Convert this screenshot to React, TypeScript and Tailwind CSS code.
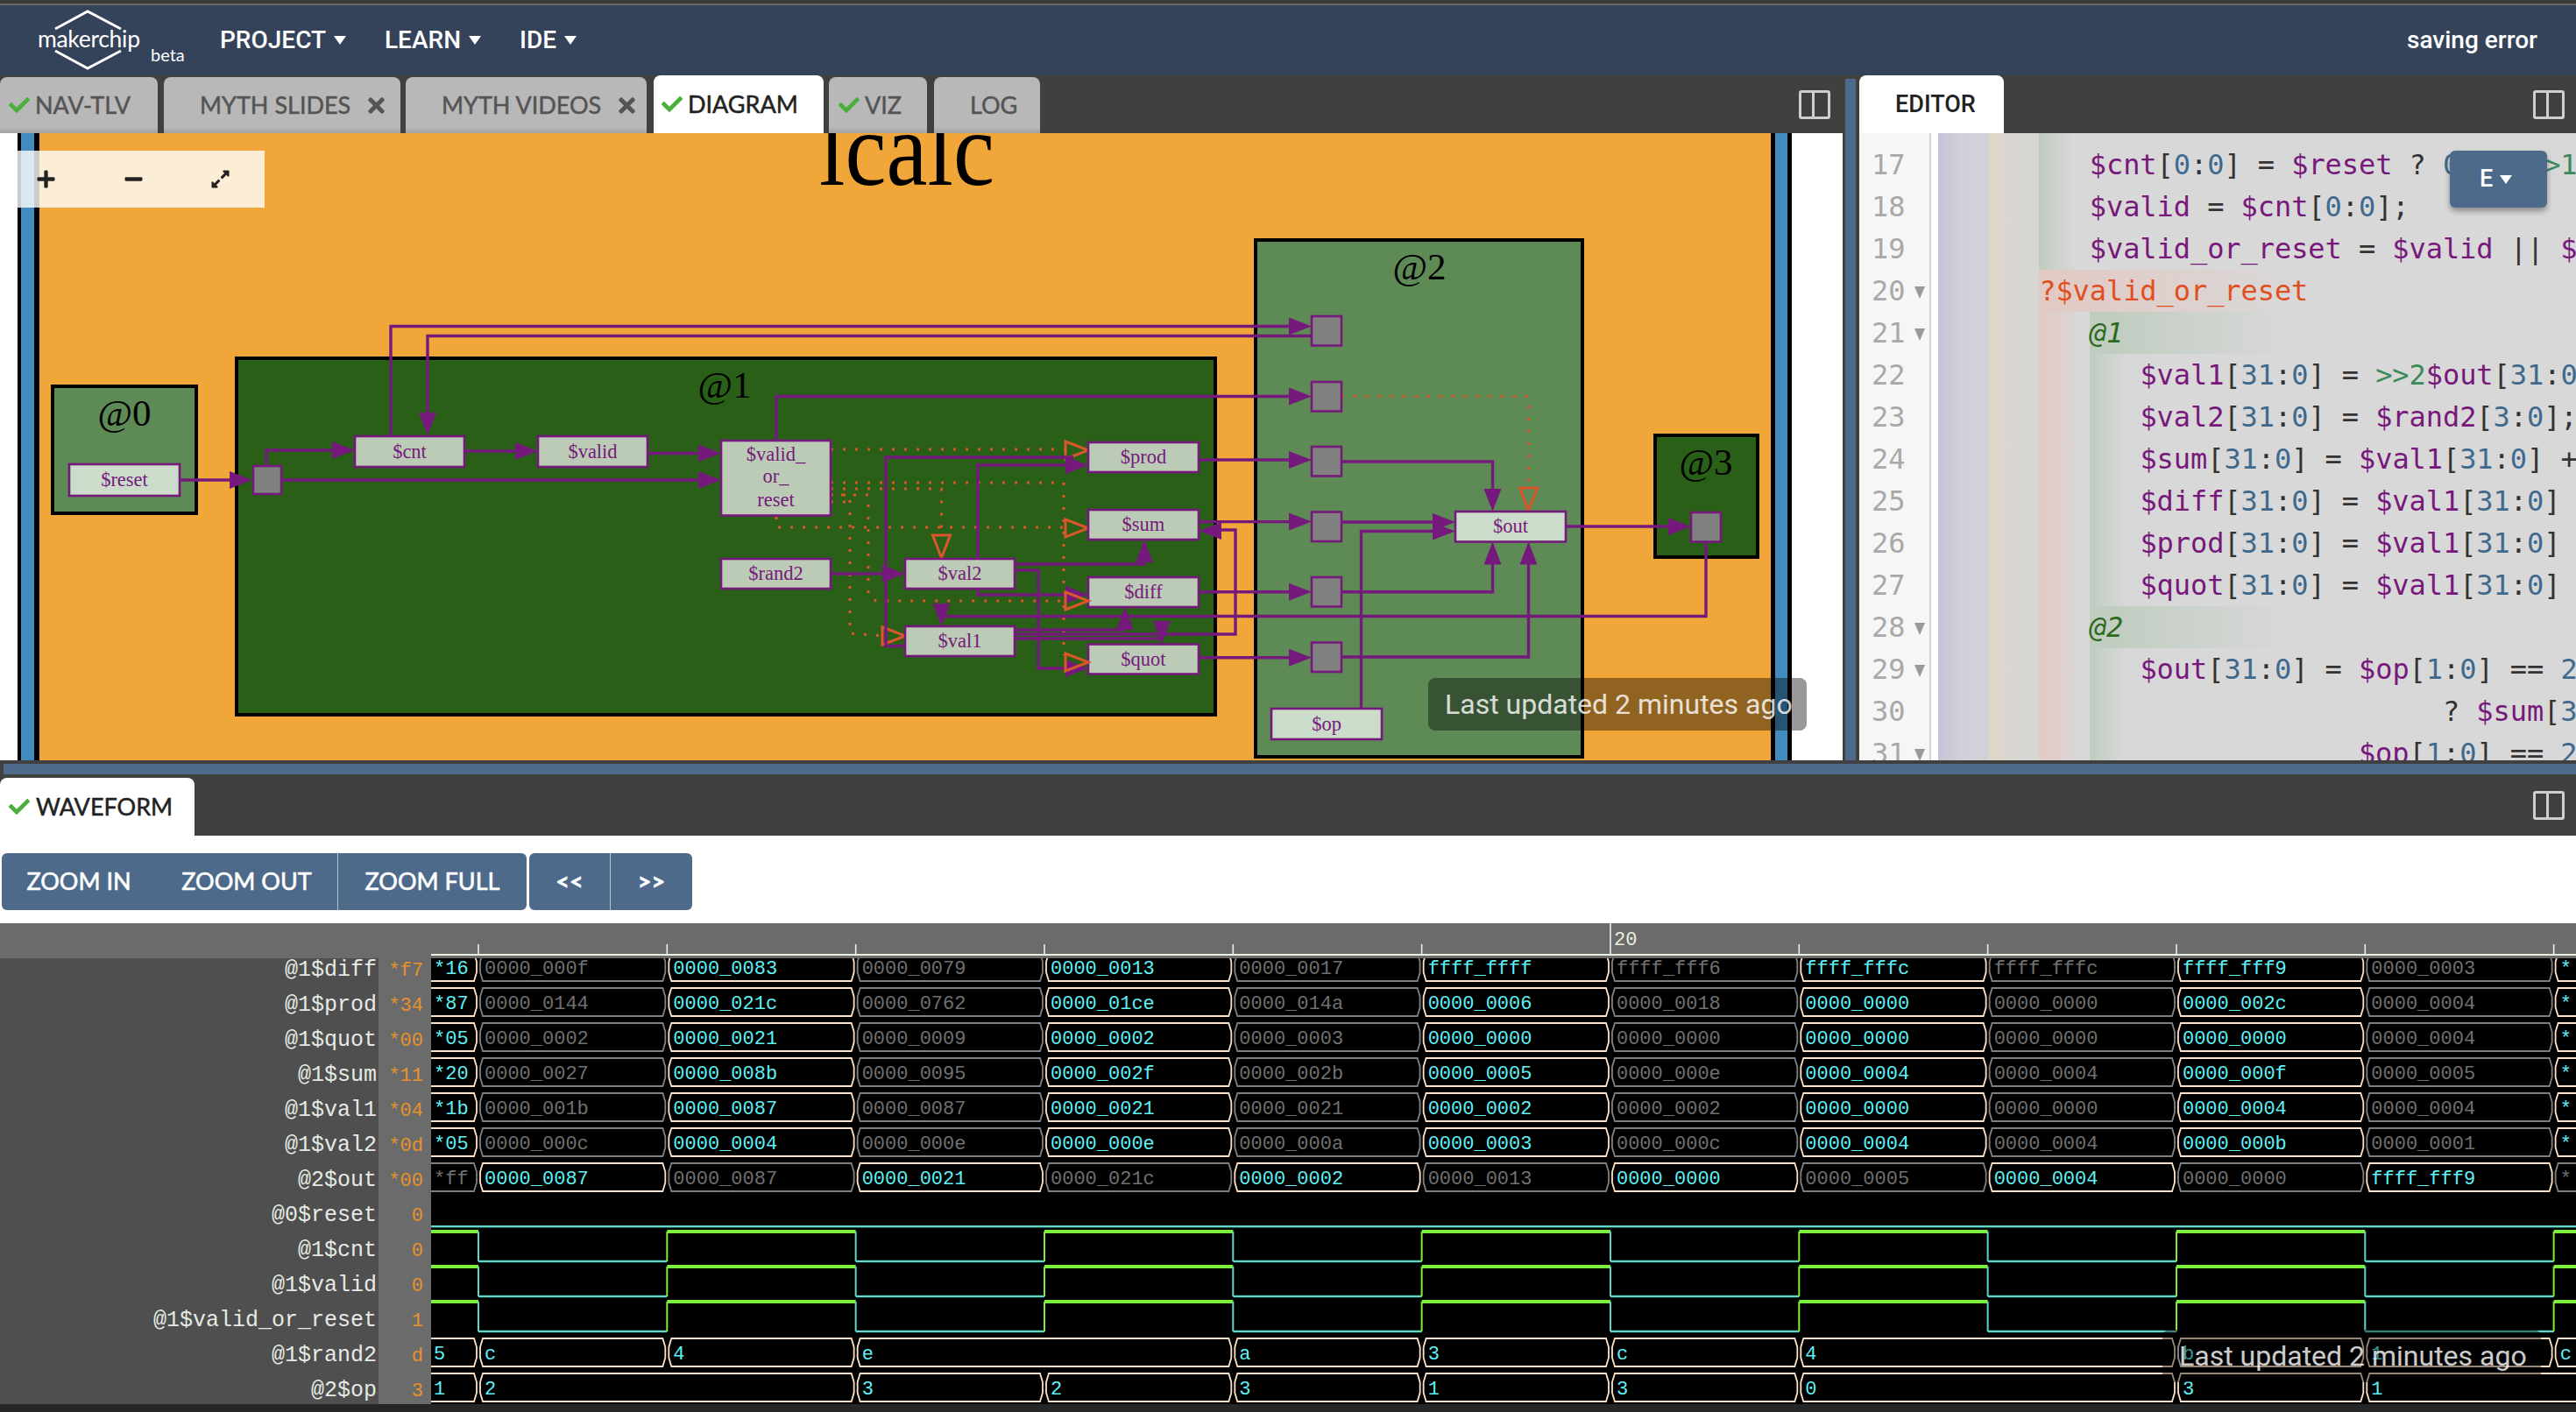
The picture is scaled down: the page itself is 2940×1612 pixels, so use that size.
import React from 'react';
import { FaCheck, FaTimes, FaPlus, FaMinus, FaExpandAlt } from 'react-icons/fa';

const PURPLE = '#751a7c';
const ORANGE = '#d9572a';

const Caret: React.FC<{ className?: string }> = ({ className }) => (
  <span className={`inline-block w-0 h-0 border-x-[7px] border-x-transparent border-t-[10px] ${className ?? 'border-t-white'}`} />
);

const SplitIcon: React.FC = () => (
  <span className="flex w-[36px] h-[33px] rounded-[3px] border-[3px] border-[#cfcfcf]">
    <span className="w-1/2 border-r-[3px] border-[#cfcfcf]" />
  </span>
);

const Toast: React.FC<{ className: string }> = ({ className }) => (
  <div className={`absolute h-[60px] w-[432px] rounded-lg bg-black/40 pl-[19px] flex items-center font-['Roboto'] text-[32px] text-white/80 whitespace-nowrap ${className}`}>
    Last updated 2 minutes ago
  </div>
);

const Tab: React.FC<{
  label: string;
  width: string;
  pad: string;
  active?: boolean;
  check?: boolean;
  close?: boolean;
}> = ({ label, width, pad, active, check, close }) => (
  <div
    className={`flex items-center rounded-t-lg font-['Lato'] text-[27px] [-webkit-text-stroke:0.5px_currentColor] whitespace-nowrap ${width} ${pad} ${
      active
        ? 'h-[66px] bg-white text-[#222]'
        : 'h-[64px] bg-linear-to-b from-[#b8b8b8] from-90% to-[#a0a0a0] text-[#555]'
    }`}
  >
    {check && <FaCheck className="text-[#4cae3c] text-[24px] mr-[6px] shrink-0" />}
    <span>{label}</span>
    {close && <FaTimes className="text-[#555] text-[27px] ml-[16px] shrink-0" />}
  </div>
);

/* ---------- diagram ---------- */

type Dir = 'r' | 'l' | 'u' | 'd';

const tri = (x: number, y: number, d: Dir) => {
  const L = 26;
  const H = 10;
  if (d === 'r') return `${x - L},${y - H} ${x},${y} ${x - L},${y + H}`;
  if (d === 'l') return `${x + L},${y - H} ${x},${y} ${x + L},${y + H}`;
  if (d === 'd') return `${x - H},${y - L} ${x},${y} ${x + H},${y - L}`;
  return `${x - H},${y + L} ${x},${y} ${x + H},${y + L}`;
};

const Arrow: React.FC<{ x: number; y: number; d: Dir }> = ({ x, y, d }) => (
  <polygon points={tri(x, y, d)} fill={PURPLE} />
);

const OpenArrow: React.FC<{ x: number; y: number; d: Dir }> = ({ x, y, d }) => (
  <polygon points={tri(x, y, d)} fill="none" stroke={ORANGE} strokeWidth={3} />
);

const Wire: React.FC<{ p: string }> = ({ p }) => (
  <polyline points={p} fill="none" stroke={PURPLE} strokeWidth={3.4} />
);

const Dots: React.FC<{ p: string }> = ({ p }) => (
  <polyline points={p} fill="none" stroke={ORANGE} strokeWidth={3} strokeDasharray="3 11" />
);

const Cell: React.FC<{ x: number; y: number; w: number; h: number; label?: string; fill?: string; text?: number }> = ({
  x,
  y,
  w,
  h,
  label,
  fill = '#bccbb5',
  text,
}) => (
  <g>
    <rect x={x} y={y} width={w} height={h} fill={fill} stroke={PURPLE} strokeWidth={2.6} />
    {label && (
      <text x={x + w / 2} y={text ?? y + h / 2 + 7} textAnchor="middle" fill={PURPLE} fontSize={22.5}>
        {label}
      </text>
    )}
  </g>
);

const Box: React.FC<{ x: number; y: number; w: number; h: number; fill: string; label: string; lx: number; ly: number }> = ({
  x,
  y,
  w,
  h,
  fill,
  label,
  lx,
  ly,
}) => (
  <g>
    <rect x={x} y={y} width={w} height={h} fill={fill} stroke="#000" strokeWidth={4} />
    <text x={lx} y={ly} textAnchor="middle" fontSize={43} fill="#000">
      {label}
    </text>
  </g>
);

const Flop: React.FC<{ y: number; x?: number }> = ({ y, x = 1497 }) => (
  <Cell x={x} y={y} w={34} h={33.5} fill="#808080" />
);

const Diagram: React.FC = () => (
  <svg viewBox="0 152 2103 716" width={2103} height={716} className="block font-['Liberation_Serif']">
    <rect x={0} y={152} width={2103} height={716} fill="#fff" />
    <rect x={20} y={152} width={25} height={716} fill="#000" />
    <rect x={24} y={152} width={15} height={716} fill="#428bbf" />
    <rect x={45} y={152} width={1976} height={716} fill="#f0a638" />
    <rect x={2021} y={152} width={24} height={716} fill="#000" />
    <rect x={2026} y={152} width={14} height={716} fill="#428bbf" />
    <text x={935} y={211} fontSize={120} fill="#000" textLength={200} lengthAdjust="spacingAndGlyphs">
      lcalc
    </text>

    <Box x={60} y={441} w={164} h={145} fill="#5e8a55" label="@0" lx={142} ly={486} />
    <Box x={270} y={409} w={1117} h={407} fill="#2a5f18" label="@1" lx={827} ly={454} />
    <Box x={1433} y={274} w={373} h={590} fill="#5e8a55" label="@2" lx={1620} ly={319} />
    <Box x={1889} y={497} w={117} h={139} fill="#2a5f18" label="@3" lx={1947} ly={542} />

    {/* retiming */}
    <Dots p="948,513 1218,513" />
    <Dots p="948,551 1214,551 1214,748" />
    <Dots p="948,558 1074.5,558 1074.5,613" />
    <Dots p="948,565 970,565 970,723 1008,726" />
    <Dots p="948,573 965,573" />
    <Dots p="960,565 991,565 991,680 1000,686 1218,686" />
    <Dots p="886,590 886,602 1218,602" />
    <Dots p="1531,452.5 1744.5,452.5 1744.5,559" />
    <OpenArrow x={1242} y={514} d="r" />
    <OpenArrow x={1242} y={603} d="r" />
    <OpenArrow x={1033} y={726} d="r" />
    <OpenArrow x={1074.5} y={637} d="d" />
    <OpenArrow x={1744.5} y={583} d="d" />

    {/* @0 / @1 wires */}
    <Wire p="205,548 264,548" />
    <Arrow x={288} y={548} d="r" />
    <Wire p="304,532 304,514 380,514" />
    <Arrow x={405} y={514} d="r" />
    <Wire p="321,548 798,548" />
    <Arrow x={823} y={548} d="r" />
    <Wire p="530,515 589,515" />
    <Arrow x={614} y={515} d="r" />
    <Wire p="739,517.5 798,517.5" />
    <Arrow x={823} y={517.5} d="r" />
    <Wire p="446,497 446,372.5 1472,372.5" />
    <Arrow x={1497} y={372.5} d="r" />
    <Wire p="1497,383.5 488,383.5 488,472" />
    <Arrow x={488} y={497} d="d" />
    <Wire p="886,503 886,452.5 1472,452.5" />
    <Arrow x={1497} y={452.5} d="r" />

    <Wire p="1368,525 1472,525" />
    <Arrow x={1497} y={525} d="r" />
    <Wire p="1368,595.6 1472,595.6" />
    <Arrow x={1497} y={595.6} d="r" />
    <Wire p="1368,675.7 1472,675.7" />
    <Arrow x={1497} y={675.7} d="r" />
    <Wire p="1368,750.7 1472,750.7" />
    <Arrow x={1497} y={750.7} d="r" />

    <Wire p="948,655 1008,655" />
    <Arrow x={1033} y={655} d="r" />
    <Wire p="1158,644 1306,644 1306,642" />
    <Arrow x={1306} y={616} d="u" />
    <Wire p="1116,638 1116,531 1217,531" />
    <Arrow x={1242} y={531} d="r" />
    <Wire p="1033,737.5 1011,737.5 1011,522 1225,522" />
    <Wire p="1116,672 1116,679 1217,679" />
    <Arrow x={1242} y={679} d="r" />
    <Wire p="1158,651 1185,651 1185,763 1217,763" />
    <Arrow x={1242} y={763} d="r" />
    <Wire p="1158,719 1284,719" />
    <Arrow x={1284} y={693} d="u" />
    <Wire p="1158,724 1410,724 1410,605 1393,605" />
    <Arrow x={1368} y={606} d="l" />
    <Wire p="1158,729 1326,729" />
    <Arrow x={1326} y={735} d="d" />
    <Wire p="1947,618 1947,703.5 1074.5,703.5" />
    <Arrow x={1074.5} y={715} d="d" />

    {/* @2 wires */}
    <Wire p="1531,527 1703.5,527 1703.5,559" />
    <Arrow x={1703.5} y={584} d="d" />
    <Wire p="1531,596 1636,596" />
    <Arrow x={1661} y={596} d="r" />
    <Wire p="1553.5,809 1553.5,606.5 1636,606.5" />
    <Arrow x={1661} y={606.5} d="r" />
    <Wire p="1531,675.8 1703.5,675.8 1703.5,644" />
    <Arrow x={1703.5} y={618.5} d="u" />
    <Wire p="1531,750 1744.5,750 1744.5,644" />
    <Arrow x={1744.5} y={618.5} d="u" />
    <Wire p="1787,601 1906,601" />
    <Arrow x={1930} y={601} d="r" />

    <Cell x={79} y={530} w={126} h={36} label="$reset" fill="#ccdccb" />
    <Cell x={289} y={532} w={32} h={32} fill="#808080" />
    <Cell x={405} y={498} w={125} h={35} label="$cnt" />
    <Cell x={614} y={498} w={125} h={35} label="$valid" />
    <Cell x={823} y={503} w={125} h={85.5} />
    <text x={885.5} y={526} textAnchor="middle" fill={PURPLE} fontSize={22.5}>
      $valid_
    </text>
    <text x={885.5} y={551} textAnchor="middle" fill={PURPLE} fontSize={22.5}>
      or_
    </text>
    <text x={885.5} y={577.5} textAnchor="middle" fill={PURPLE} fontSize={22.5}>
      reset
    </text>
    <Cell x={823} y={638} w={125} h={34} label="$rand2" />
    <Cell x={1242} y={505} w={126} h={34} label="$prod" />
    <Cell x={1242} y={582} w={126} h={34} label="$sum" />
    <Cell x={1242} y={659} w={126} h={34} label="$diff" />
    <Cell x={1242} y={735.5} w={126} h={34} label="$quot" />
    <Cell x={1033} y={638} w={125} h={34} label="$val2" />
    <Cell x={1033} y={715} w={125} h={34} label="$val1" />
    <Flop y={361} />
    <Flop y={436} />
    <Flop y={510} />
    <Flop y={584.5} />
    <Flop y={659} />
    <Flop y={733.5} />
    <Flop x={1930} y={585} />
    <Cell x={1661} y={584} w={126} h={34.5} label="$out" fill="#ccdccb" />
    <Cell x={1451} y={809} w={126} h={35} label="$op" fill="#ccdccb" />
    <OpenArrow x={1242} y={686} d="r" />
    <OpenArrow x={1242} y={756} d="r" />
  </svg>
);

/* ---------- editor ---------- */

const GUIDE: Record<string, string> = {
  b: 'bg-linear-to-r from-[#c4c4d8] to-[#d2d0d8] to-50%',
  t: 'bg-linear-to-r from-[#e0d8c6] to-[#d8d6d2] to-50%',
  g: 'bg-linear-to-r from-[#bfccbf] to-[#d8d8d8] to-70%',
  r: 'bg-linear-to-r from-[#e2c9c3] to-[#d8d8d8] to-80%',
};

const tint = (src: string) =>
  src.split(/(\$[a-z_0-9]+|>>\d|\d+)/).map((t, i) => {
    if (t.startsWith('$')) return <span key={i} className="text-[#77197a]">{t}</span>;
    if (t.startsWith('>>')) return <span key={i} className="text-[#3a8a5a]">{t}</span>;
    if (/^\d+$/.test(t)) return <span key={i} className="text-[#3f6a8e]">{t}</span>;
    return <span key={i} className="text-[#333]">{t}</span>;
  });

const Line: React.FC<{ n?: number; fold?: boolean; guides: string[]; children?: React.ReactNode; h?: string }> = ({
  n,
  fold,
  guides,
  children,
  h = 'h-[48px]',
}) => (
  <div className={`flex ${h} shrink-0`}>
    <div className="flex items-center w-[80px] pl-[14px] bg-[#f6f6f6] text-[#a8a8a8] shrink-0">
      {n}
      {fold && <span className="ml-[11px] mt-[3px] inline-block h-0 w-0 border-x-[6px] border-t-[14px] border-x-transparent border-t-[#999]" />}
    </div>
    <div className="w-[2px] bg-[#d4d4d4] shrink-0" />
    <div className="w-[8px] bg-white shrink-0" />
    {guides.map((g, i) => (
      <div key={i} className={`w-[57.6px] shrink-0 ${GUIDE[g]}`} />
    ))}
    <div className="flex items-center whitespace-pre">{children}</div>
  </div>
);

const Editor: React.FC = () => (
  <div className="relative h-[716px] overflow-hidden bg-[#d8d8d8] font-['DejaVu_Sans_Mono'] text-[32px] tracking-[-0.07px]">
    <div className="flex flex-col">
      <Line h="h-[12px]" guides={['b', 't', 'g']} />
      <Line n={17} guides={['b', 't', 'g']}>{tint('$cnt[0:0] = $reset ? 0  : >>1$cnt + 1;')}</Line>
      <Line n={18} guides={['b', 't', 'g']}>{tint('$valid = $cnt[0:0];')}</Line>
      <Line n={19} guides={['b', 't', 'g']}>{tint('$valid_or_reset = $valid || $reset;')}</Line>
      <Line n={20} fold guides={['b', 't']}>
        <span className="flex items-center h-full w-[300px] bg-linear-to-r from-[#e2c9c3] to-[#d8d8d8] text-[#e04f20]">?$valid_or_reset</span>
      </Line>
      <Line n={21} fold guides={['b', 't', 'r']}>
        <span className="flex items-center h-full w-[230px] bg-linear-to-r from-[#bfccbf] to-[#d8d8d8] text-[#2c6b1c] italic">@1</span>
      </Line>
      <Line n={22} guides={['b', 't', 'r', 'g']}>{tint('$val1[31:0] = >>2$out[31:0];')}</Line>
      <Line n={23} guides={['b', 't', 'r', 'g']}>{tint('$val2[31:0] = $rand2[3:0];')}</Line>
      <Line n={24} guides={['b', 't', 'r', 'g']}>{tint('$sum[31:0] = $val1[31:0] + $val2[31:0];')}</Line>
      <Line n={25} guides={['b', 't', 'r', 'g']}>{tint('$diff[31:0] = $val1[31:0] - $val2[31:0];')}</Line>
      <Line n={26} guides={['b', 't', 'r', 'g']}>{tint('$prod[31:0] = $val1[31:0] * $val2[31:0];')}</Line>
      <Line n={27} guides={['b', 't', 'r', 'g']}>{tint('$quot[31:0] = $val1[31:0] / $val2[31:0];')}</Line>
      <Line n={28} fold guides={['b', 't', 'r']}>
        <span className="flex items-center h-full w-[230px] bg-linear-to-r from-[#bfccbf] to-[#d8d8d8] text-[#2c6b1c] italic">@2</span>
      </Line>
      <Line n={29} fold guides={['b', 't', 'r', 'g']}>{tint('$out[31:0] = $op[1:0] == 2')}</Line>
      <Line n={30} guides={['b', 't', 'r', 'g']}>{tint('                  ? $sum[31:0] :')}</Line>
      <Line n={31} fold guides={['b', 't', 'r', 'g']}>{tint('             $op[1:0] == 2')}</Line>
    </div>
    <div className="absolute left-[674px] top-[20px] flex h-[65px] w-[111px] items-center justify-center gap-[8px] rounded-md bg-[#4e6a8b] pr-[6px] font-['Roboto'] text-[27px] font-medium text-white shadow-[0_4px_6px_rgba(0,0,0,0.35)]">
      E <Caret />
    </div>
  </div>
);

/* ---------- waveform ---------- */

const T0 = 546;
const STEP = 215.33;
const tick = (i: number) => T0 + STEP * i;
const END = 2960;

const BUSES = [
  ['*16', '0000_000f', '0000_0083', '0000_0079', '0000_0013', '0000_0017', 'ffff_ffff', 'ffff_fff6', 'ffff_fffc', 'ffff_fffc', 'ffff_fff9', '0000_0003', '*'],
  ['*87', '0000_0144', '0000_021c', '0000_0762', '0000_01ce', '0000_014a', '0000_0006', '0000_0018', '0000_0000', '0000_0000', '0000_002c', '0000_0004', '*'],
  ['*05', '0000_0002', '0000_0021', '0000_0009', '0000_0002', '0000_0003', '0000_0000', '0000_0000', '0000_0000', '0000_0000', '0000_0000', '0000_0004', '*'],
  ['*20', '0000_0027', '0000_008b', '0000_0095', '0000_002f', '0000_002b', '0000_0005', '0000_000e', '0000_0004', '0000_0004', '0000_000f', '0000_0005', '*'],
  ['*1b', '0000_001b', '0000_0087', '0000_0087', '0000_0021', '0000_0021', '0000_0002', '0000_0002', '0000_0000', '0000_0000', '0000_0004', '0000_0004', '*'],
  ['*05', '0000_000c', '0000_0004', '0000_000e', '0000_000e', '0000_000a', '0000_0003', '0000_000c', '0000_0004', '0000_0004', '0000_000b', '0000_0001', '*'],
  ['*ff', '0000_0087', '0000_0087', '0000_0021', '0000_021c', '0000_0002', '0000_0013', '0000_0000', '0000_0005', '0000_0004', '0000_0000', 'ffff_fff9', '*'],
];

const RAND2: [number, string][] = [[-1, '5'], [0, 'c'], [1, '4'], [2, 'e'], [4, 'a'], [5, '3'], [6, 'c'], [7, '4'], [9, 'b'], [10, '1'], [11, 'c']];
const OP: [number, string][] = [[-1, '1'], [0, '2'], [2, '3'], [3, '2'], [4, '3'], [5, '1'], [6, '3'], [7, '0'], [9, '3'], [10, '1']];

const LABELS: [string, string][] = [
  ['@1$diff', '*f7'],
  ['@1$prod', '*34'],
  ['@1$quot', '*00'],
  ['@1$sum', '*11'],
  ['@1$val1', '*04'],
  ['@1$val2', '*0d'],
  ['@2$out', '*00'],
  ['@0$reset', '0'],
  ['@1$cnt', '0'],
  ['@1$valid', '0'],
  ['@1$valid_or_reset', '1'],
  ['@1$rand2', 'd'],
  ['@2$op', '3'],
];

const Seg: React.FC<{ x0: number; x1: number; top: number; label: string; bright: boolean }> = ({ x0, x1, top, label, bright }) => {
  const bot = top + 32;
  const l = x0 < 500 ? 480 : x0 + 2;
  const d = `M${l + 3} ${top} L${x1 - 5} ${top} L${x1 - 2} ${top + 10} L${x1 - 2} ${bot - 10} L${x1 - 5} ${bot} L${l + 3} ${bot} L${l} ${bot - 10} L${l} ${top + 10} Z`;
  return (
    <g>
      <path d={d} fill="none" stroke={bright ? '#ffe2c6' : '#808080'} strokeWidth={1.8} />
      <text x={(x0 < 500 ? 488 : x0) + 7} y={top + 24} fontSize={22} fill={bright ? '#5ff0f5' : '#707070'}>
        {label}
      </text>
    </g>
  );
};

const Toggle: React.FC<{ high: number; low: number }> = ({ high, low }) => {
  const edges = [492, ...Array.from({ length: 12 }, (_, i) => tick(i)), END];
  return (
    <g>
      {edges.slice(0, -1).map((x, i) => {
        const nx = edges[i + 1];
        return i % 2 === 0 ? (
          <g key={i}>
            <rect x={x} y={high - 2} width={nx - x} height={4} fill="#7cf03c" />
            <line x1={nx} x2={nx} y1={high} y2={low} stroke="#5fd6c6" strokeWidth={2} />
          </g>
        ) : (
          <g key={i}>
            <rect x={x} y={low - 1.2} width={nx - x} height={2.4} fill="#5fd6c6" />
            <line x1={nx} x2={nx} y1={high} y2={low} stroke="#7cf03c" strokeWidth={2} />
          </g>
        );
      })}
    </g>
  );
};

const Sparse: React.FC<{ rows: [number, string][]; top: number }> = ({ rows, top }) => (
  <g>
    {rows.map(([start, label], i) => (
      <Seg
        key={i}
        x0={start < 0 ? 492 : tick(start)}
        x1={i + 1 < rows.length ? tick(rows[i + 1][0]) : END}
        top={top}
        label={label}
        bright
      />
    ))}
  </g>
);

const Waves: React.FC = () => (
  <svg viewBox="492 1054 2448 549" width={2448} height={549} className="block font-['Liberation_Mono'] bg-black">
    {BUSES.map((vals, r) =>
      vals.map((v, i) => {
        const x0 = i === 0 ? 492 : tick(i - 1);
        const x1 = i < 12 ? tick(i) : END;
        const bright = r === 6 ? i % 2 === 1 : i % 2 === 0;
        return <Seg key={`${r}-${i}`} x0={x0} x1={x1} top={1088 + 40 * r} label={v} bright={bright} />;
      })
    )}
    <rect x={492} y={1399} width={2448} height={2.4} fill="#5fd6c6" />
    <Toggle high={1406} low={1440} />
    <Toggle high={1446} low={1480} />
    <Toggle high={1486} low={1520} />
    <Sparse rows={RAND2} top={1528} />
    <Sparse rows={OP} top={1568} />
    <rect x={492} y={1054} width={2448} height={40} fill="#6b6b6b" />
    <rect x={492} y={1089} width={2448} height={2} fill="#e8f0e0" />
    {Array.from({ length: 12 }, (_, i) => (
      <line key={i} x1={tick(i)} x2={tick(i)} y1={i === 6 ? 1054 : 1078} y2={1090} stroke="#e8f0e0" strokeWidth={1.6} />
    ))}
    <text x={1842} y={1079} fontSize={22} fill="#e8f0e0">
      20
    </text>
  </svg>
);

const ToolButton: React.FC<{ width: string; divider?: boolean; children: React.ReactNode }> = ({ width, divider, children }) => (
  <div className={`flex h-full items-center justify-center ${width} ${divider ? 'border-l border-white/60' : ''}`}>{children}</div>
);

export default function App() {
  return (
    <div className="relative flex h-[1612px] w-[2940px] flex-col overflow-hidden bg-[#404040]">
      <div className="h-[4px] shrink-0 bg-[#3a3a3a]" />
      <div className="h-[2px] shrink-0 bg-[#666]" />

      {/* navbar */}
      <nav className="flex h-[80px] shrink-0 items-center bg-[#34435a] font-['Roboto'] text-[28px] font-medium text-white">
        <div className="relative ml-[43px] h-[80px] w-[208px] shrink-0">
          <svg viewBox="0 0 118 80" width={118} height={80} className="absolute left-0 top-0">
            <polyline points="20,27 57,7 95,27" fill="none" stroke="#fff" strokeWidth={3} />
            <polyline points="20,52 57,72 95,52" fill="none" stroke="#fff" strokeWidth={3} />
          </svg>
          <span className="absolute left-0 top-[23px] font-['Lato'] text-[26.5px] font-normal leading-[30px] tracking-[-0.3px]">makerchip</span>
          <span className="absolute left-[129px] top-[44px] font-['Lato'] text-[20px] font-normal leading-[24px]">beta</span>
        </div>
        <div className="flex w-[188px] shrink-0 items-center">
          <span>PROJECT</span>
          <Caret className="ml-[9px] border-t-white" />
        </div>
        <div className="flex w-[154px] shrink-0 items-center">
          <span>LEARN</span>
          <Caret className="ml-[9px] border-t-white" />
        </div>
        <span>IDE</span>
        <Caret className="ml-[9px] border-t-white" />
        <span className="ml-auto mr-[44px]">saving error</span>
      </nav>

      {/* upper panes */}
      <div className="flex h-[782px] shrink-0">
        <div className="flex w-[2103px] shrink-0 flex-col">
          <div className="flex h-[66px] shrink-0 items-end">
            <Tab label="NAV-TLV" width="w-[180px]" pad="pl-[10px]" check />
            <div className="w-[7px]" />
            <Tab label="MYTH SLIDES" width="w-[270px]" pad="pl-[41px]" close />
            <div className="w-[6px]" />
            <Tab label="MYTH VIDEOS" width="w-[275px]" pad="pl-[41px]" close />
            <div className="w-[8px]" />
            <Tab label="DIAGRAM" width="w-[194px]" pad="pl-[9px]" active check />
            <div className="w-[6px]" />
            <Tab label="VIZ" width="w-[112px]" pad="pl-[11px]" check />
            <div className="w-[8px]" />
            <Tab label="LOG" width="w-[121px]" pad="pl-[41px]" />
            <div className="ml-auto mb-[16px] mr-[14px]">
              <SplitIcon />
            </div>
          </div>
          <div className="relative h-[716px]">
            <Diagram />
            <div className="absolute left-0 top-[20px] flex h-[65px] w-[302px] items-center bg-white/80 pl-[41px] text-[23px] text-[#222]">
              <FaPlus />
              <FaMinus className="ml-[77px]" />
              <FaExpandAlt className="ml-[76px]" />
            </div>
          </div>
        </div>

        <div className="flex w-[19px] shrink-0 pl-[3px] pr-[4px] pt-[4px]">
          <div className="w-full bg-[#4e6a8b]" />
        </div>

        <div className="flex min-w-0 flex-1 flex-col">
          <div className="flex h-[66px] shrink-0 items-end">
            <div className="flex h-[66px] w-[165px] items-center rounded-t-lg bg-white pl-[41px] font-['Roboto'] text-[27px] font-medium text-[#222]">EDITOR</div>
            <div className="ml-auto mb-[16px] mr-[13px]">
              <SplitIcon />
            </div>
          </div>
          <Editor />
        </div>
      </div>

      {/* horizontal resizer */}
      <div className="h-[4px] shrink-0" />
      <div className="ml-[4px] h-[12px] shrink-0 bg-[#4e6a8b]" />

      {/* waveform tabs */}
      <div className="flex h-[70px] shrink-0 items-end">
        <div className="flex h-[66px] w-[222px] items-center rounded-t-lg bg-white pl-[10px] font-['Lato'] text-[27px] text-[#222] [-webkit-text-stroke:0.5px_currentColor]">
          <FaCheck className="mr-[7px] text-[24px] text-[#4cae3c]" />
          WAVEFORM
        </div>
        <div className="ml-auto mb-[18px] mr-[13px]">
          <SplitIcon />
        </div>
      </div>

      {/* waveform toolbar */}
      <div className="flex h-[100px] shrink-0 gap-[3px] bg-white pl-[2px] pt-[20px] font-['Lato'] text-[27px] text-white [-webkit-text-stroke:0.6px_currentColor]">
        <div className="flex h-[65px] rounded-md bg-[#4e6a8b]">
          <ToolButton width="w-[176px]">ZOOM IN</ToolButton>
          <ToolButton width="w-[207px]">ZOOM OUT</ToolButton>
          <ToolButton width="w-[216px]" divider>ZOOM FULL</ToolButton>
        </div>
        <div className="flex h-[65px] rounded-md bg-[#4e6a8b] font-bold">
          <ToolButton width="w-[92px]">&lt;&lt;</ToolButton>
          <ToolButton width="w-[94px]" divider>&gt;&gt;</ToolButton>
        </div>
      </div>

      {/* waveform */}
      <div className="flex h-[549px] shrink-0">
        <div className="flex w-[492px] shrink-0 flex-col">
          <div className="h-[40px] shrink-0 bg-[#6b6b6b]" />
          <div className="flex h-[509px] overflow-hidden font-['Liberation_Mono']">
            <div className="-mt-[6px] flex w-[432px] flex-col bg-[#4f4f4f] pr-[2px] text-right text-[25px] text-[#e4ebe2]">
              {LABELS.map(([name]) => (
                <div key={name} className="flex h-[40px] shrink-0 items-center justify-end whitespace-pre">{name}</div>
              ))}
            </div>
            <div className="-mt-[6px] flex w-[60px] flex-col bg-[#6b6b6b] pr-[9px] text-[22px] text-[#e8912d]">
              {LABELS.map(([name, value]) => (
                <div key={name} className="flex h-[40px] shrink-0 items-center justify-end">{value}</div>
              ))}
            </div>
          </div>
        </div>
        <Waves />
      </div>
      <div className="flex-1 bg-[#262626]" />

      <Toast className="left-[1630px] top-[774px]" />
      <Toast className="left-[2468px] top-[1518px]" />
    </div>
  );
}
